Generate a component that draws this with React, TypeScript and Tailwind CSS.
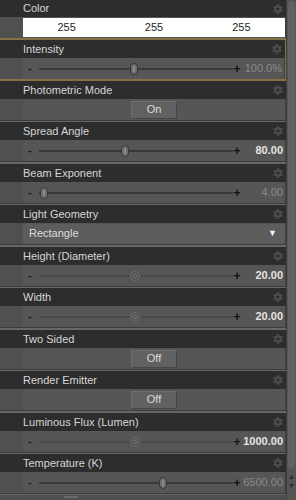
import { FaCog } from 'react-icons/fa';

type Slider = { kind: 'slider'; pos: number; value: string; bright?: boolean; knob: 'pill' | 'dot' };
type Toggle = { kind: 'toggle'; value: string };
type Select = { kind: 'select'; value: string };
type Color = { kind: 'color'; values: string[] };
type Control = Slider | Toggle | Select | Color;

interface Prop {
  label: string;
  control: Control;
  gap: 2 | 3;
  selected?: boolean;
  headerH?: number;
}

const props: Prop[] = [
  { label: 'Color', control: { kind: 'color', values: ['255', '255', '255'] }, gap: 2, headerH: 17 },
  { label: 'Intensity', control: { kind: 'slider', pos: 133, value: '100.0%', knob: 'pill' }, gap: 2, selected: true },
  { label: 'Photometric Mode', control: { kind: 'toggle', value: 'On' }, gap: 2 },
  { label: 'Spread Angle', control: { kind: 'slider', pos: 124, value: '80.00', bright: true, knob: 'pill' }, gap: 3 },
  { label: 'Beam Exponent', control: { kind: 'slider', pos: 43, value: '4.00', knob: 'pill' }, gap: 2 },
  { label: 'Light Geometry', control: { kind: 'select', value: 'Rectangle' }, gap: 3 },
  { label: 'Height (Diameter)', control: { kind: 'slider', pos: 134, value: '20.00', bright: true, knob: 'dot' }, gap: 2 },
  { label: 'Width', control: { kind: 'slider', pos: 134, value: '20.00', bright: true, knob: 'dot' }, gap: 3 },
  { label: 'Two Sided', control: { kind: 'toggle', value: 'Off' }, gap: 2 },
  { label: 'Render Emitter', control: { kind: 'toggle', value: 'Off' }, gap: 3 },
  { label: 'Luminous Flux (Lumen)', control: { kind: 'slider', pos: 134, value: '1000.00', bright: true, knob: 'dot' }, gap: 2 },
  { label: 'Temperature (K)', control: { kind: 'slider', pos: 162, value: '6500.00', knob: 'pill' }, gap: 2 },
];

function SliderRow({ c }: { c: Slider }) {
  // track runs from x=38 to x=232 inside the 286px column
  const left = c.pos - 38 - (c.knob === 'pill' ? 4 : 5);
  return (
    <div className="flex h-full items-center">
      <span className="w-[16px] pl-[5px] text-[11px] font-bold leading-none text-[#161616]">-</span>
      <div className="relative h-[12px] w-[194px]">
        <div className={`mt-[5px] h-[2px] w-full ${c.knob === 'dot' ? 'bg-[#4a4a4a]' : 'bg-[#3b3838]'}`} />
        {c.knob === 'pill' ? (
          <div
            className="absolute top-0 flex h-[12px] w-[8px] items-center justify-center rounded-full border border-[#363636] bg-[#6e6e6e]"
            style={{ left }}
          >
            <div className="h-[6px] w-[2px] rounded-full bg-[#8c8c8c]" />
          </div>
        ) : (
          <div
            className="absolute top-[1px] flex h-[10px] w-[10px] items-center justify-center rounded-full border border-[#6c6c6c] bg-[#575757]"
            style={{ left }}
          >
            <div className="h-[4px] w-[4px] rounded-full border border-[#7a7a7a] bg-[#444]" />
          </div>
        )}
      </div>
      <span className="w-[8px] text-center text-[12px] font-bold leading-none text-[#111]">+</span>
      <span
        className={`flex-1 pr-[2px] text-right text-[11px] leading-none ${
          c.bright ? 'font-bold text-[#e4e4e4]' : 'text-[#8a8a8a]'
        }`}
      >
        {c.value}
      </span>
    </div>
  );
}

function ControlRow({ c }: { c: Control }) {
  if (c.kind === 'color') {
    return (
      <div className="grid h-[19px] grid-cols-3 bg-white text-[11px] text-[#1e1e1e]">
        {c.values.map((v, i) => (
          <div key={i} className="flex items-center justify-center">
            {v}
          </div>
        ))}
      </div>
    );
  }
  if (c.kind === 'toggle') {
    return (
      <div className="flex h-full items-center">
        <div className="ml-[108px] flex h-[18px] w-[46px] items-center justify-center border border-[#474747] border-t-[#6e6e6e] border-l-[#6e6e6e] bg-[#616161] text-[11px] text-[#dcdcdc]">
          {c.value}
        </div>
      </div>
    );
  }
  if (c.kind === 'select') {
    return (
      <div className="flex h-[20px] items-center justify-between bg-[#5d5d5d] pl-[6px] pr-[8px] text-[11px] text-[#dedede]">
        <span>{c.value}</span>
        <span className="text-[9px] text-[#f2f2f2]">▼</span>
      </div>
    );
  }
  return <SliderRow c={c} />;
}

function Group({ p }: { p: Prop }) {
  return (
    <div className={p.selected ? 'border-r border-[#857242]' : ''}>
      <div
        className="flex items-center justify-between bg-[#2d2d2d] pl-[23px] pr-[3px]"
        style={{ height: p.headerH ?? 18 }}
      >
        <span className="text-[11px] leading-none text-[#d6d6d6]">{p.label}</span>
        <FaCog className="text-[#4c4c4c]" size={10} />
      </div>
      <div className="flex h-[21px]">
        <div className="w-[23px] bg-[#505050]" />
        <div className="flex flex-1 flex-col justify-center border-r border-[#3e3e3e] bg-[#565656]">
          <ControlRow c={p.control} />
        </div>
      </div>
    </div>
  );
}

export default function App() {
  return (
    <div
      className="flex h-[500px] w-[296px] overflow-hidden bg-[#4e4e4e]"
      style={{ fontFamily: '"Liberation Sans", Arial, sans-serif' }}
    >
      <div className="flex w-[286px] flex-col">
        {props.map((p, i) => {
          const next = props[i + 1];
          const gold = p.selected || next?.selected;
          return (
            <div key={p.label}>
              <Group p={p} />
              {gold ? (
                <div className="h-[2px] bg-[#857242]" />
              ) : p.gap === 3 ? (
                <div className="h-[3px] border-t border-[#3c3c3c] bg-[#676767]" />
              ) : (
                <div className="h-[2px] border-t border-[#3c3c3c] bg-[#676767]" />
              )}
            </div>
          );
        })}
        <div className="flex flex-1 items-end bg-[#4f4f4f] pl-[64px]">
          <div className="mb-[2px] h-[2px] w-[14px] bg-[#6a6a6a]" />
        </div>
      </div>
      {/* scrollbar */}
      <div className="flex w-[10px] flex-col border-l border-[#3e3e3e] bg-[#555]">
        <div className="mx-[1px] mt-[1px] flex-1 rounded-sm bg-[#616161]" />
        <div className="flex flex-col items-center py-[4px] text-[7px] leading-[9px] text-[#2a2a2a]">
          <span>▲</span>
          <span>▼</span>
        </div>
        <div className="h-[6px]" />
      </div>
    </div>
  );
}
